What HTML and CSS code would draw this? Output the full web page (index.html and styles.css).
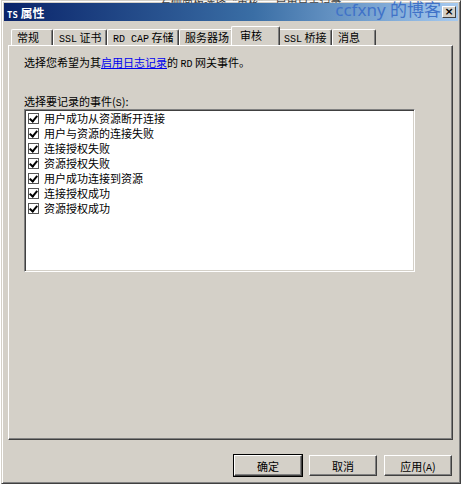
FILE: index.html
```html
<!DOCTYPE html>
<html lang="zh-CN">

<head>
  <meta charset="UTF-8">
  <title>TS 属性</title>
  <link rel="stylesheet" href="styles.css">
</head>

<body>
  <div class="behind">右侧面板选择“审核”，启用日志记录</div>

  <div class="window">
    <div class="titlebar">
      <span class="title"><span class="ascii">TS</span> 属性</span>
      <span class="watermark">ccfxny 的博客</span>
      <span class="close">×</span>
    </div>

    <div class="body">
      <div class="tabs">
        <div class="tab">常规</div>
        <div class="tab"><span class="ascii">SSL</span> 证书</div>
        <div class="tab"><span class="ascii">RD CAP</span> 存储</div>
        <div class="tab">服务器场</div>
        <div class="tab active">审核</div>
        <div class="tab"><span class="ascii">SSL</span> 桥接</div>
        <div class="tab">消息</div>
      </div>

      <div class="panel">
        <p class="intro">选择您希望为其<a href="#">启用日志记录</a>的 <span class="ascii">RD</span> 网关事件。</p>

        <p class="label">选择要记录的事件(<span class="ascii">S</span>):</p>
        <div class="listbox">
          <label class="item"><span class="check"></span>用户成功从资源断开连接</label>
          <label class="item"><span class="check"></span>用户与资源的连接失败</label>
          <label class="item"><span class="check"></span>连接授权失败</label>
          <label class="item"><span class="check"></span>资源授权失败</label>
          <label class="item"><span class="check"></span>用户成功连接到资源</label>
          <label class="item"><span class="check"></span>连接授权成功</label>
          <label class="item"><span class="check"></span>资源授权成功</label>
        </div>
      </div>

      <div class="buttons">
        <button class="default">确定</button>
        <button>取消</button>
        <button>应用(<span class="ascii">A</span>)</button>
      </div>
    </div>
  </div>
</body>

</html>
```

FILE: styles.css
```css
body {
  margin: 0;
  width: 463px;
  height: 484px;
  overflow: hidden;
  background-color: #ffffff;
  font-family: 'Noto Sans CJK SC', 'DejaVu Sans', sans-serif;
  font-size: 11px;
  color: #000;
}

.ascii {
  font-family: 'Liberation Mono', monospace;
  font-size: 10px;
  line-height: 1;
}

.behind {
  height: 3px;
  overflow: hidden;
  line-height: 4px;
  font-size: 11px;
  color: #444;
  padding-left: 160px;
}

.window {
  margin-top: -3px;
  margin-left: 1px;
  width: 460px;
  height: 484px;
  background-color: #d4d0c8;
  border: 1px solid #d4d0c8;
  border-right-color: #404040;
  border-bottom-color: #404040;
  box-shadow: inset 1px 1px 0 #ffffff, inset -1px -1px 0 #808080;
  box-sizing: border-box;
  padding: 2px;
}

.titlebar {
  position: relative;
  height: 18px;
  background: linear-gradient(to right, #0a246a 0%, #3a6ea5 55%, #a6caf0 100%);
  display: flex;
  align-items: center;
  padding-left: 3px;
}

.title {
  color: #fff;
  font-weight: bold;
  font-size: 12px;
}

.title .ascii {
  font-family: 'DejaVu Sans Mono', monospace;
  font-size: 9px;
  font-weight: bold;
}

.watermark {
  position: absolute;
  right: 17px;
  top: -3px;
  color: #3f72c8;
  font-family: 'Noto Sans', 'Noto Sans CJK SC', sans-serif;
  font-size: 17px;
  line-height: 20px;
}

.close {
  position: absolute;
  right: 2px;
  top: 3px;
  width: 14px;
  height: 12px;
  background-color: #d4d0c8;
  border: 1px solid;
  border-color: #fff #404040 #404040 #fff;
  box-sizing: border-box;
  font-family: 'DejaVu Sans', sans-serif;
  font-weight: bold;
  font-size: 11px;
  line-height: 9px;
  text-align: center;
}

.body {
  padding: 5px 5px 0 4px;
}

.tabs {
  display: flex;
  height: 19px;
  align-items: flex-end;
  padding-left: 3px;
  position: relative;
  z-index: 1;
}

.tab {
  height: 16px;
  line-height: 15px;
  padding-left: 5px;
  border: 1px solid #d4d0c8;
  border-left-color: #fff;
  border-top-color: #fff;
  border-right-color: #404040;
  border-bottom: none;
  box-shadow: inset -1px 0 0 #808080;
  border-radius: 2px 2px 0 0;
  box-sizing: border-box;
  white-space: nowrap;
}

.tab:nth-child(1) { width: 42px; }
.tab:nth-child(2) { width: 54px; }
.tab:nth-child(3) { width: 72px; }
.tab:nth-child(4) { width: 54px; }
.tab:nth-child(6) { width: 54px; }
.tab:nth-child(7) { width: 44px; }

.tab.active {
  width: 49px;
  height: 19px;
  padding-left: 8px;
  margin: 0 -2px;
  background-color: #d4d0c8;
  line-height: 16px;
  position: relative;
  z-index: 2;
}

.panel {
  height: 395px;
  border: 1px solid;
  border-color: #fff #404040 #404040 #fff;
  box-shadow: inset -1px -1px 0 #808080;
  box-sizing: border-box;
  padding: 9px 15px 0 15px;
}

p {
  margin: 0;
  height: 14px;
  line-height: 14px;
}

.intro a {
  color: #0000ee;
  text-decoration: underline;
}

.label {
  margin-top: 25px;
  margin-bottom: 1px;
}

.listbox {
  width: 391px;
  height: 163px;
  background-color: #fff;
  border: 1px solid;
  border-color: #808080 #fff #fff #808080;
  box-shadow: inset 1px 1px 0 #404040, inset -1px -1px 0 #d4d0c8;
  box-sizing: border-box;
  padding: 1px 2px;
}

.item {
  display: flex;
  align-items: center;
  height: 15px;
  line-height: 15px;
  font-size: 11px;
}

.check {
  flex: none;
  width: 11px;
  height: 11px;
  margin: 0 5px 0 1px;
  border: 1px solid #555;
  box-sizing: border-box;
  position: relative;
}

.check::after {
  content: '';
  position: absolute;
  left: 2px;
  top: 0px;
  width: 3px;
  height: 6px;
  border: solid #000;
  border-width: 0 2px 2px 0;
  transform: rotate(40deg);
}

.buttons {
  display: flex;
  justify-content: flex-end;
  gap: 7px;
  padding: 15px 1px 0 0;
}

button {
  width: 68px;
  height: 21px;
  padding: 0;
  background-color: #d4d0c8;
  font-family: 'Noto Sans CJK SC', sans-serif;
  font-size: 11px;
  color: #000;
  border: 1px solid;
  border-color: #fff #404040 #404040 #fff;
  box-shadow: inset -1px -1px 0 #808080;
}

button.default {
  outline: 1px solid #000;
}
```
